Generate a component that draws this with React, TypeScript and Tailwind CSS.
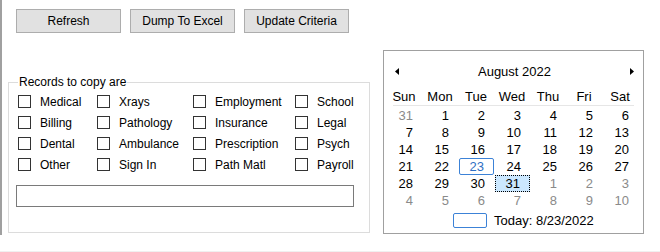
const buttons = ["Refresh", "Dump To Excel", "Update Criteria"];

const boxes = [
  ["Medical", "Xrays", "Employment", "School"],
  ["Billing", "Pathology", "Insurance", "Legal"],
  ["Dental", "Ambulance", "Prescription", "Psych"],
  ["Other", "Sign In", "Path Matl", "Payroll"],
];

const dayNames = ["Sun", "Mon", "Tue", "Wed", "Thu", "Fri", "Sat"];

// [day, inCurrentMonth]
const weeks: [number, boolean][][] = [
  [[31, false], [1, true], [2, true], [3, true], [4, true], [5, true], [6, true]],
  [[7, true], [8, true], [9, true], [10, true], [11, true], [12, true], [13, true]],
  [[14, true], [15, true], [16, true], [17, true], [18, true], [19, true], [20, true]],
  [[21, true], [22, true], [23, true], [24, true], [25, true], [26, true], [27, true]],
  [[28, true], [29, true], [30, true], [31, true], [1, false], [2, false], [3, false]],
  [[4, false], [5, false], [6, false], [7, false], [8, false], [9, false], [10, false]],
];

function CheckItem({ label }: { label: string }) {
  return (
    <div className="flex items-center h-[21px]">
      <div className="w-[13px] h-[13px] border border-[#333333] bg-white shrink-0" />
      <span className="ml-[9px] text-[12px] leading-[14px] whitespace-nowrap">{label}</span>
    </div>
  );
}

function DayCell({ day, inMonth, today, selected }: { day: number; inMonth: boolean; today: boolean; selected: boolean }) {
  let cls = "w-[35px] h-[17px] flex items-center justify-end pr-[9px] text-[13px] leading-none ";
  if (today) cls += "border border-[#3c82d7] rounded-[2px] text-[#2f6fc4] pr-[8px]";
  else if (selected) cls += "bg-[#cce8ff] border border-dotted border-black pr-[8px]";
  else cls += inMonth ? "text-black" : "text-[#8a8a8a]";
  return (
    <div className="w-[36px] h-[17px] flex justify-end">
      <div className={cls}>{day}</div>
    </div>
  );
}

function Calendar() {
  return (
    <div className="ml-[13px] mt-[50px] w-[261px] h-[184px] border border-[#a0a0a0] bg-white shrink-0 flex flex-col">
      <div className="mt-[10px] h-[20px] flex items-center pl-[11px] pr-[9px]">
        <svg width="4" height="7" viewBox="0 0 4 7">
          <polygon points="4,0 4,7 0,3.5" fill="#000" />
        </svg>
        <div className="flex-1 text-center text-[13px] leading-none">August 2022</div>
        <svg width="4" height="7" viewBox="0 0 4 7">
          <polygon points="0,0 0,7 4,3.5" fill="#000" />
        </svg>
      </div>
      <div className="mt-[7px] h-[17px] grid grid-cols-[repeat(7,36px)] pl-[2px]">
        {dayNames.map((d) => (
          <div key={d} className="flex items-center justify-center text-[13px] leading-none">
            {d}
          </div>
        ))}
      </div>
      <div className="ml-[9px] w-[241px] h-px bg-[#e6e6e6]" />
      <div className="mt-[1px] pl-[2px] flex flex-col">
        {weeks.map((w, i) => (
          <div key={i} className="flex">
            {w.map(([d, m], j) => (
              <DayCell key={j} day={d} inMonth={m} today={i === 3 && j === 2} selected={i === 4 && j === 3} />
            ))}
          </div>
        ))}
      </div>
      <div className="mt-[3px] h-[16px] flex items-center pl-[69px]">
        <div className="w-[34px] h-[15px] border border-[#3c82d7] rounded-[2px]" />
        <span className="ml-[7px] text-[13px] leading-none">Today: 8/23/2022</span>
      </div>
    </div>
  );
}

export default function App() {
  return (
    <div className="w-[660px] h-[252px] bg-white text-black font-['Liberation_Sans',Arial,sans-serif] flex flex-col overflow-hidden">
      <div className="flex h-[251px]">
        <div className="w-[2px] h-[235px] bg-[#a0a0a0] shrink-0" />
        <div className="w-[368px] shrink-0 flex flex-col pl-[6px]">
          <div className="mt-[9px] ml-[8px] flex gap-[9px]">
            {buttons.map((b) => (
              <button
                key={b}
                className="w-[105px] h-[24px] bg-[#e1e1e1] border border-[#adadad] text-[12px] leading-none text-black"
              >
                {b}
              </button>
            ))}
          </div>
          <div className="relative mt-[49px] w-[362px] h-[151px] border border-[#dcdcdc]">
            <span className="absolute left-[9px] -top-[8px] px-[1px] bg-white text-[12px] leading-[14px]">
              Records to copy are
            </span>
            <div className="pt-[8px] pl-[9px] grid grid-cols-[79px_96px_102px_auto]">
              {boxes.flat().map((l) => (
                <CheckItem key={l} label={l} />
              ))}
            </div>
            <div className="mt-[10px] ml-[7px] w-[338px] h-[22px] border border-[#7a7a7a] bg-white" />
          </div>
        </div>
        <Calendar />
      </div>
      <div className="h-px bg-[#f0f0f0]" />
    </div>
  );
}
